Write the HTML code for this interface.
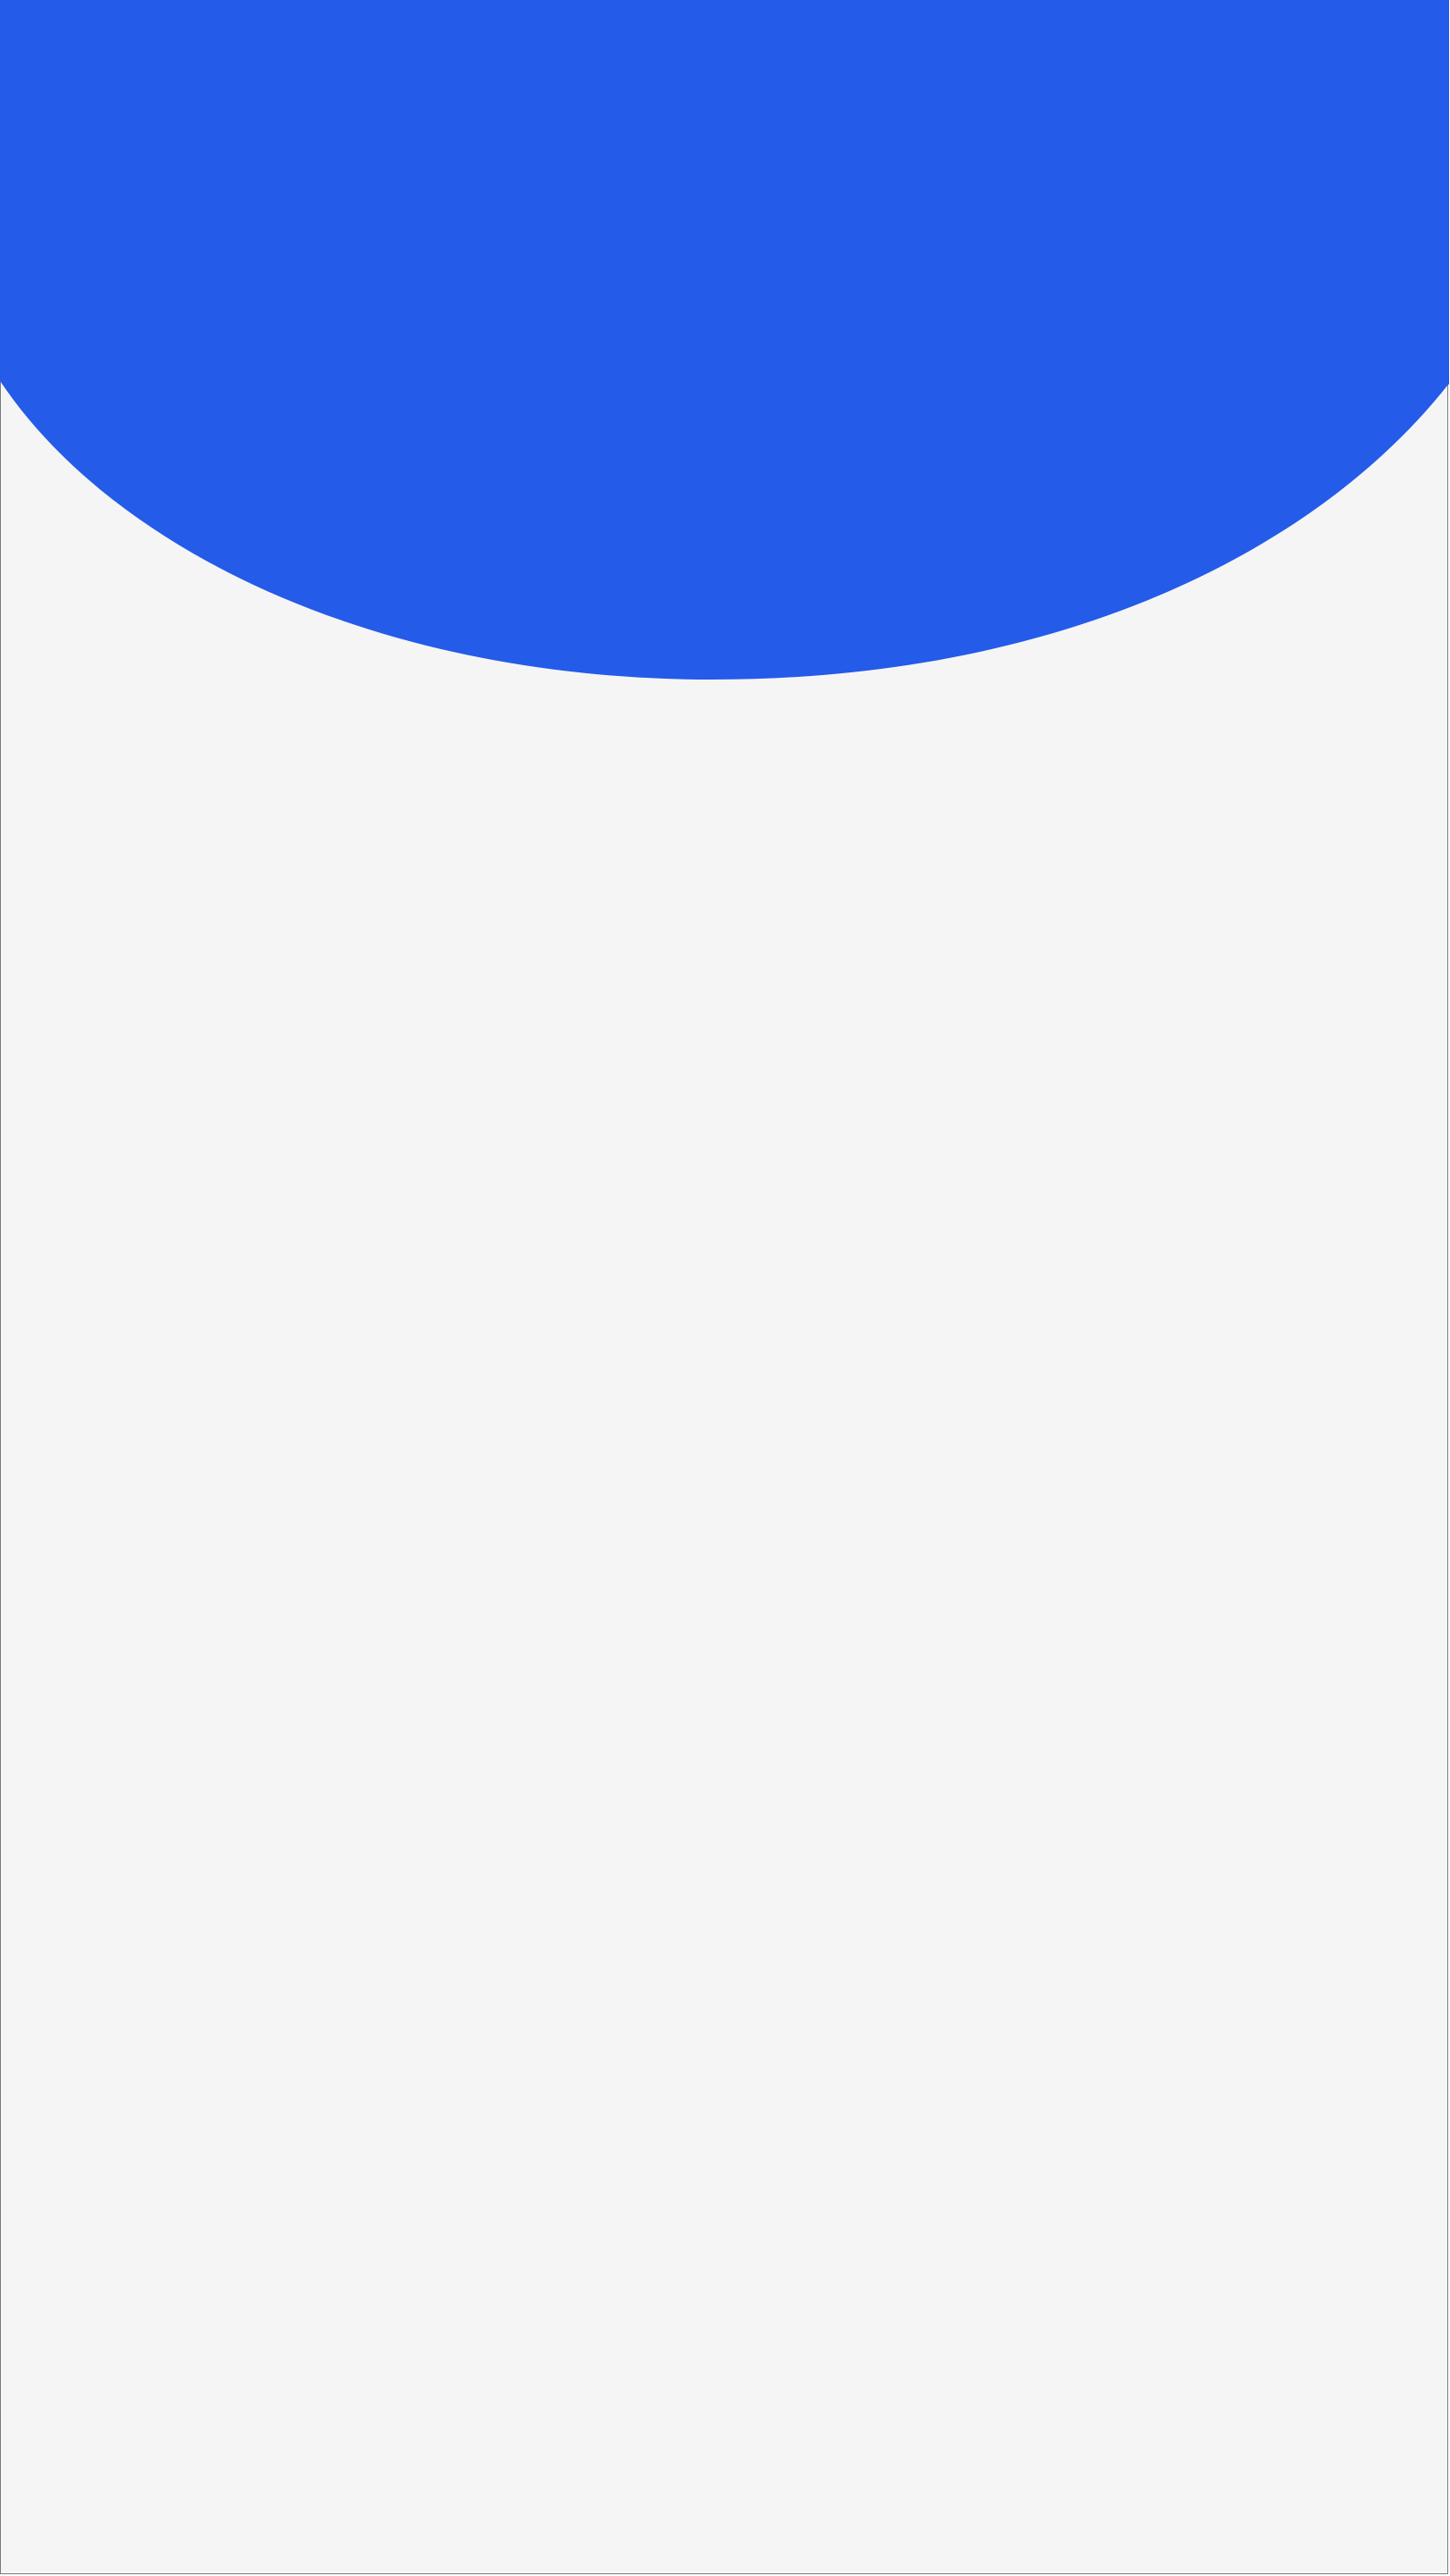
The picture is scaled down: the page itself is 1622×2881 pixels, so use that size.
<!DOCTYPE html>
<html><head><meta charset="utf-8"><style>
html,body{margin:0;padding:0;background:#fff;}
.wrap{position:relative;width:1622px;height:2881px;overflow:hidden;background:#fff;}
.box{position:absolute;left:0;top:0;width:1618px;height:2877px;border:1px solid #7a7a7a;background:#f5f5f5;}
svg{position:absolute;left:0;top:0;}
</style></head><body>
<div class="wrap">
<div class="box"></div>
<svg width="1622" height="2881" viewBox="0 0 1622 2881">
<path d="M0,0 H1621 V430 L1620,430 C1470,620 1180,760 797,760 C430,760 130,620 0,426 Z" fill="#245BE8"/>
</svg>
</div>
</body></html>
